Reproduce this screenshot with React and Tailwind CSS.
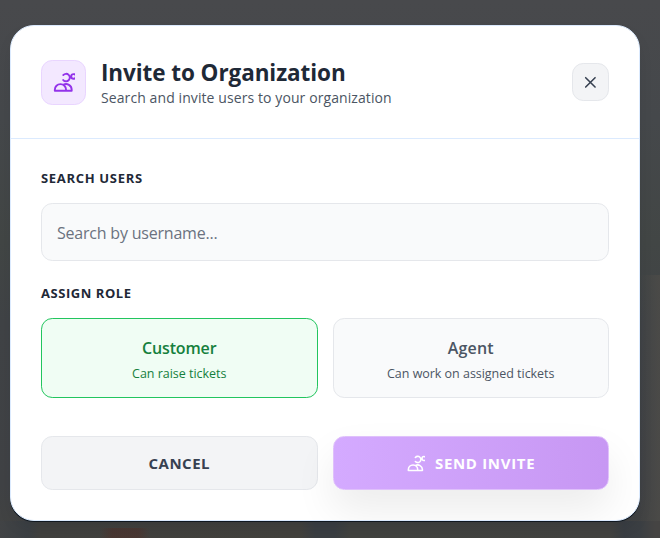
import React from "react";

function InviteIcon({ className }) {
  return (
    <svg className={className} viewBox="0 0 24 24" fill="none" stroke="currentColor" strokeWidth="2">
      <path d="M12 4.354a4 4 0 110 5.292M15 21H3v-1a6 6 0 0112 0v1zm0 0h6v-1a6 6 0 00-9-5.197m13.5-9a2.5 2.5 0 11-5 0 2.5 2.5 0 015 0z" strokeLinecap="round" strokeLinejoin="round" />
    </svg>
  );
}

function RoleCard({ title, note, className, titleClass }) {
  return (
    <button className={`flex h-20 flex-1 flex-col items-center rounded-[11.25px] border pt-[17px] ${className}`}>
      <span className={`text-[16px] font-semibold leading-6 ${titleClass}`}>{title}</span>
      <span className="mt-1 text-[12.5px] leading-5 tracking-[-0.03px]">{note}</span>
    </button>
  );
}

export default function App() {
  return (
    <div className="h-[538px] w-[660px] overflow-hidden bg-[linear-gradient(90deg,transparent_0,transparent_100px,rgba(80,48,42,0.55)_112px,rgba(80,48,42,0.55)_138px,transparent_150px),linear-gradient(90deg,#414345_0,#3b3f43_28px,#40403e_40px,#42413d_300px,#3a3e42_315px,#3a3e42_335px,#41423f_350px,#424240_610px,#393d42_624px,#3b3f43_640px,#454443_655px),linear-gradient(90deg,transparent_640px,rgba(76,75,72,0.8)_658px),linear-gradient(180deg,#48494c_0%,#45484b_22%,#424645_45%,#404346_60%,#404245_90%,#424342_100%)] bg-[position:0_528px,0_521px,0_275px,0_0] bg-[length:660px_10px,660px_17px,660px_263px,660px_538px] bg-no-repeat px-[10px] pt-[25px] font-['Open_Sans','Noto_Sans',sans-serif]">
      <div className="h-[496px] w-[630px] overflow-hidden rounded-3xl border border-[#dbeafe] bg-white shadow-[0_1px_0_#101820,0_8px_20px_-10px_rgba(20,25,35,0.3)]">
        <header className="flex h-[113px] items-center border-b border-[#dbeafe] px-[30px]">
          <div className="flex size-[45px] items-center justify-center rounded-[11.25px] border border-[#e9d5ff] bg-[#f3e8ff] text-[#9333ea]">
            <InviteIcon className="size-[22.5px]" />
          </div>
          <div className="ml-[15px] flex-1 whitespace-nowrap pt-[3px]">
            <h2 className="text-[22.5px] font-bold leading-7 tracking-[-0.08px] text-[#1f2937]">Invite to Organization</h2>
            <p className="text-[14px] leading-[22px] tracking-[0.09px] text-[#4b5563]">Search and invite users to your organization</p>
          </div>
          <button className="flex h-[38px] w-[37px] items-center justify-center rounded-[11.25px] border border-[#e5e7eb] bg-[#f3f4f6] text-[#374151]">
            <svg className="size-[18.75px]" viewBox="0 0 24 24" fill="none" stroke="currentColor" strokeWidth="2" strokeLinecap="round">
              <path d="M6 18L18 6M6 6l12 12" />
            </svg>
          </button>
        </header>
        <div className="px-[30px] pt-[29px]">
          <h3 className="text-[13px] font-bold leading-5 tracking-[0.68px] text-[#1f2937]">SEARCH USERS</h3>
          <input
            className="mt-[15px] block h-[58px] w-full rounded-[11.25px] border border-[#e5e7eb] bg-[#f9fafb] px-[15px] pt-[2px] text-[16px] tracking-[-0.21px] outline-none placeholder:text-[#6b7280]"
            placeholder="Search by username..."
          />
          <h3 className="mt-[22px] text-[13px] font-bold leading-5 tracking-[0.55px] text-[#1f2937]">ASSIGN ROLE</h3>
          <div className="mt-[15px] flex gap-[15px]">
            <RoleCard title="Customer" note="Can raise tickets" titleClass="tracking-[-0.15px]" className="border-[#22c55e] bg-[#f0fdf4] text-[#15803d]" />
            <RoleCard title="Agent" note="Can work on assigned tickets" titleClass="tracking-[0.2px]" className="border-[#e5e7eb] bg-[#f9fafb] text-[#4b5563]" />
          </div>
          <div className="mt-[38px] flex gap-[15px]">
            <button className="h-[54px] flex-1 rounded-[11.25px] border border-[#e5e7eb] bg-[#f3f4f6] text-[15px] font-bold tracking-[0.5px] text-[#374151]">CANCEL</button>
            <button className="flex h-[54px] flex-1 items-center justify-center gap-[10px] rounded-[11.25px] border border-[#dfc0fb] bg-linear-to-r from-[#d4aaff] to-[#c797f3] text-[15px] font-bold tracking-[0.68px] text-white shadow-[0_20px_40px_rgba(0,0,0,0.08)]">
              <InviteIcon className="size-[18.75px]" />
              SEND INVITE
            </button>
          </div>
        </div>
      </div>
    </div>
  );
}
